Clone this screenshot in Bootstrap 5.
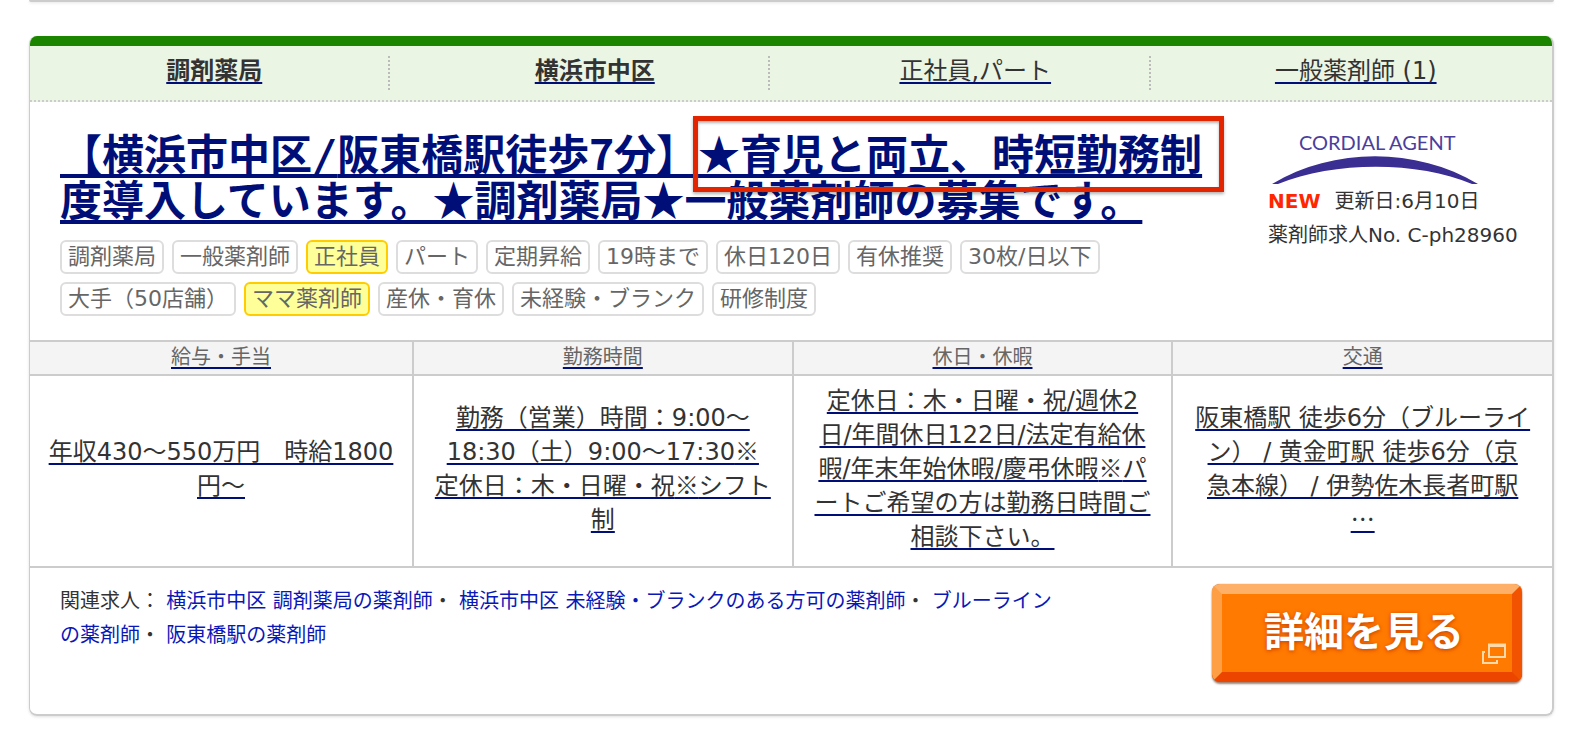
<!DOCTYPE html>
<html lang="ja">
<head>
<meta charset="utf-8">
<meta name="viewport" content="width=device-width, initial-scale=1">
<title>調剤薬局 横浜市中区の薬剤師求人</title>
<link href="https://cdn.jsdelivr.net/npm/bootstrap@5.3.0/dist/css/bootstrap.min.css" rel="stylesheet">
<style>
  :root { --line: #ccc; --navy: #000f78; --ink: #333; }
  body { font-family: "DejaVu Sans", "Noto Sans CJK JP", sans-serif; color: var(--ink); font-size: 20px; line-height: 34px; background: #fff; }
  .page-wrap { padding: 0 34px 32px 29px; }
  .sym { font-family: "Noto Sans CJK JP", sans-serif; line-height: 0; }
  .prev-job { height: 2px; background: var(--line); border-radius: 0 0 6px 6px; box-shadow: 0 1px 3px rgba(0,0,0,.12); }
  .job { margin-top: 34px; border: 1px solid var(--line); border-width: 0 2px 2px 1px; border-radius: 8px; box-shadow: 0 1px 3px rgba(0,0,0,.12); overflow: hidden; }
  .u-link { color: inherit; text-decoration: underline 2px var(--navy); text-underline-offset: 3px; text-decoration-skip-ink: none; }
  .facts { background: #ebf5e4; border-top: 10px solid #1b8500; border-bottom: 2px dotted var(--line); padding: 8px 0 12px; font-size: 24px; }
  .facts li { flex: 1 1 0; padding: 0 21px 0 9px; text-align: center; position: relative; }
  .facts li:not(:last-child)::after { content: ""; position: absolute; right: 21px; top: 2px; bottom: -2px; border-right: 2px dotted #bbb; }
  .summary { padding: 27px 30px 24px; }
  .job-title { font-family: "Noto Sans CJK JP", sans-serif; font-size: 42px; line-height: 46px; font-weight: 700; margin: 0 0 19px; white-space: nowrap; }
  .job-title a { color: var(--navy); text-decoration-thickness: 4px; text-underline-offset: 4px; }
  .slash { font-family: "DejaVu Sans Mono", monospace; line-height: 0; }
  .marked { position: relative; }
  .marked::after { content: ""; position: absolute; left: -5px; right: -22px; top: -5px; height: 76px; border: 5px solid #e32400; box-shadow: 0 2px 3px rgba(0,0,0,.3), inset 0 2px 3px rgba(0,0,0,.3); }
  .tags { gap: 8px; max-width: 1060px; }
  .tags li { font-size: 22px; line-height: 30px; padding: 0 6px; border: 2px solid #ddd; border-radius: 6px; color: #666; white-space: nowrap; }
  .tags .hot { background: #ffff99; border-color: #fc0; }
  .agent { width: 254px; white-space: nowrap; padding-top: 2px; }
  .agent svg { display: block; margin-left: 4px; }
  .is-new { color: #ff2600; margin-right: 14px; }
  .terms { table-layout: fixed; width: 100%; text-align: center; border-bottom: 2px solid var(--line); }
  .terms th, .terms td { border-right: 2px solid var(--line); vertical-align: middle; white-space: nowrap; }
  .terms th:last-child, .terms td:last-child { border-right: 0; }
  .terms th { font-size: 20px; line-height: 30px; padding: 0 0 2px; font-weight: 400; background: #f4f4f4; color: #666; border-top: 2px solid var(--line); border-bottom: 2px solid var(--line); }
  .terms td { font-size: 24px; line-height: 34px; padding: 8px 0 12px; }
  .col-pay { width: 383px; }
  .foot { padding: 16px 30px 32px; }
  .related a { color: #0a18b8; text-decoration: none; }
  .related { white-space: nowrap; }
  .detail-btn { position: relative; width: 310px; height: 98px; flex: none; background: #ff7a00; color: #fff; font: 700 40px/70px "Noto Sans CJK JP", sans-serif; padding: 0 6px 8px 0; border: 10px solid; border-color: #ffb068 #f25300 #ec4500 #ff9f45; border-radius: 8px; box-shadow: 0 0 1px #b85000, 0 2px 2px rgba(60,20,0,.5), inset 0 0 3px #ff7a00; text-shadow: 0 1px 4px #c43c00; }
  .detail-btn svg { position: absolute; right: 5px; bottom: 7px; }
</style>
</head>
<body>
<main class="page-wrap">
  <div class="prev-job"></div>
  <article class="job">
    <ul class="facts list-unstyled d-flex mb-0">
      <li><a class="u-link fw-bold" href="#">調剤薬局</a></li>
      <li><a class="u-link fw-bold" href="#">横浜市中区</a></li>
      <li><a class="u-link" href="#">正社員,パート</a></li>
      <li><a class="u-link" href="#">一般薬剤師 (1)</a></li>
    </ul>

    <div class="summary d-flex justify-content-between">
      <div>
        <h2 class="job-title"><a class="u-link" href="#">【横浜市中区<span class="slash">/</span>阪東橋駅徒歩7分】<span class="marked">★育児と両立、時短勤務制</span><br>度導入しています。★調剤薬局★一般薬剤師の募集です。</a></h2>
        <ul class="tags list-unstyled d-flex flex-wrap mb-0">
          <li>調剤薬局</li><li>一般薬剤師</li><li class="hot">正社員</li><li>パート</li><li>定期昇給</li><li>19時まで</li><li>休日120日</li><li>有休推奨</li><li>30枚/日以下</li>
          <li>大手（50店舗）</li><li class="hot">ママ薬剤師</li><li>産休・育休</li><li>未経験・ブランク</li><li>研修制度</li>
        </ul>
      </div>
      <aside class="agent">
        <svg width="206" height="53" viewBox="0 0 206 53" overflow="visible" role="img" aria-label="CORDIAL AGENT">
          <text x="27" y="19" font-family="Lato, sans-serif" font-size="20" fill="#4a409c">CORDIAL AGENT</text>
          <path d="M0 53C62 16 144 16 206 53H200C146 30 62 30 6 53Z" fill="#3a2e92"/>
        </svg>
        <div><strong class="is-new">NEW</strong>更新日:6月10日</div>
        <div>薬剤師求人No. C-ph28960</div>
      </aside>
    </div>

    <table class="terms">
      <colgroup><col class="col-pay"><col><col><col></colgroup>
      <thead>
        <tr>
          <th scope="col"><a class="u-link" href="#">給与・手当</a></th>
          <th scope="col"><a class="u-link" href="#">勤務時間</a></th>
          <th scope="col"><a class="u-link" href="#">休日・休暇</a></th>
          <th scope="col"><a class="u-link" href="#">交通</a></th>
        </tr>
      </thead>
      <tbody>
        <tr>
          <td><a class="u-link" href="#">年収430～550万円　時給1800<br>円～</a></td>
          <td><a class="u-link" href="#">勤務（営業）時間：9:00～<br>18:30（土）9:00～17:30<span class="sym">※</span><br>定休日：木・日曜・祝<span class="sym">※</span>シフト<br>制</a></td>
          <td><a class="u-link" href="#">定休日：木・日曜・祝/週休2<br>日/年間休日122日/法定有給休<br>暇/年末年始休暇/慶弔休暇<span class="sym">※</span>パ<br>ートご希望の方は勤務日時間ご<br>相談下さい。</a></td>
          <td><a class="u-link" href="#">阪東橋駅 徒歩6分（ブルーライ<br>ン） / 黄金町駅 徒歩6分（京<br>急本線） / 伊勢佐木長者町駅<br><span class="sym">…</span></a></td>
        </tr>
      </tbody>
    </table>

    <div class="foot d-flex justify-content-between">
      <p class="related mb-0">関連求人： <a href="#">横浜市中区 調剤薬局の薬剤師</a>・ <a href="#">横浜市中区 未経験・ブランクのある方可の薬剤師</a>・ <a href="#">ブルーライン<br>の薬剤師</a>・ <a href="#">阪東橋駅の薬剤師</a></p>
      <button type="button" class="detail-btn">詳細を見る
        <svg width="26" height="22" viewBox="0 0 26 22" fill="none" stroke="#ffd9a8" stroke-width="2" aria-hidden="true"><path d="M8 3H24V14H8ZM4 9H2V20H16V17"/><path d="M7 2H25" stroke-width="3"/></svg>
      </button>
    </div>
  </article>
</main>
<script src="https://cdn.jsdelivr.net/npm/bootstrap@5.3.0/dist/js/bootstrap.bundle.min.js"></script>
</body>
</html>
